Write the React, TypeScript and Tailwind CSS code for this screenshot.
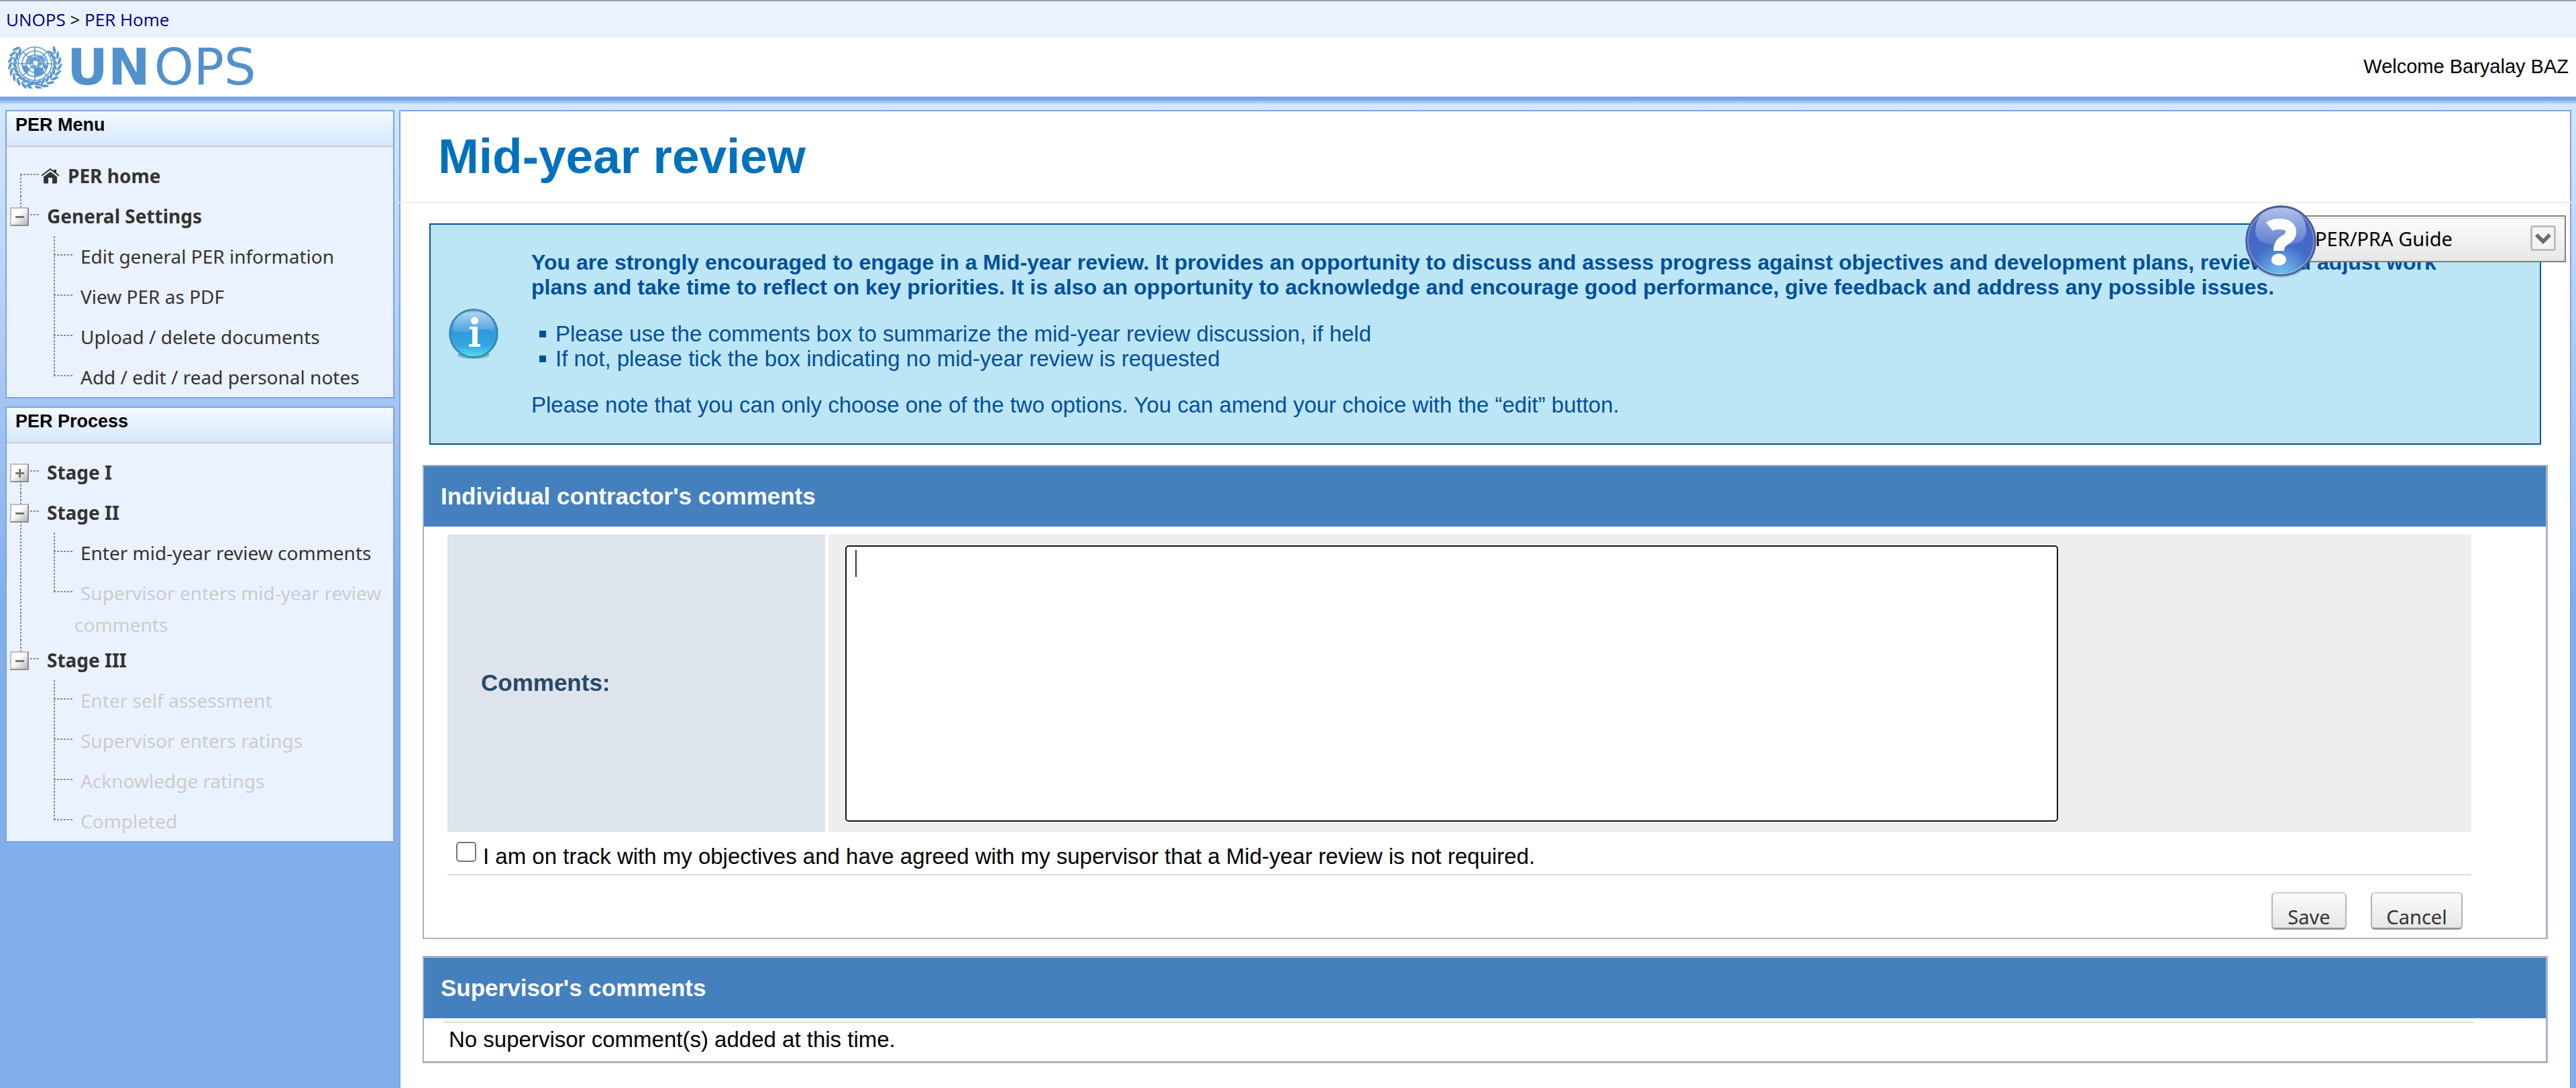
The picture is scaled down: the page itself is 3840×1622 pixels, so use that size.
import React from "react";

type Leaf = { label: string; disabled?: boolean };
type Branch = { label: string; open?: boolean; home?: boolean; items?: Leaf[] };

const menu: Branch[] = [
  { label: "PER home", home: true },
  {
    label: "General Settings",
    open: true,
    items: [
      { label: "Edit general PER information" },
      { label: "View PER as PDF" },
      { label: "Upload / delete documents" },
      { label: "Add / edit / read personal notes" },
    ],
  },
];

const stages: Branch[] = [
  { label: "Stage I", open: false },
  {
    label: "Stage II",
    open: true,
    items: [
      { label: "Enter mid-year review comments" },
      { label: "Supervisor enters mid-year review comments", disabled: true },
    ],
  },
  {
    label: "Stage III",
    open: true,
    items: [
      { label: "Enter self assessment", disabled: true },
      { label: "Supervisor enters ratings", disabled: true },
      { label: "Acknowledge ratings", disabled: true },
      { label: "Completed", disabled: true },
    ],
  },
];

const dotsV =
  "absolute w-[2px] bg-[repeating-linear-gradient(to_bottom,#8a8a8a_0px,#8a8a8a_3px,transparent_3px,transparent_5px)]";
const dotsH =
  "absolute h-[2px] bg-[repeating-linear-gradient(to_right,#8a8a8a_0px,#8a8a8a_3px,transparent_3px,transparent_5px)]";

function Emblem() {
  const leaves = [];
  for (let i = 0; i < 9; i++) {
    const a = ((100 + i * 15) * Math.PI) / 180;
    for (const side of [1, -1]) {
      const x = 41 + side * Math.cos(a) * 33;
      const y = 28 + Math.sin(a) * 31;
      const deg = (side * (a * 180)) / Math.PI;
      leaves.push(
        <g key={`${i}-${side}`} transform={`translate(${x} ${y}) rotate(${side === 1 ? deg : 180 + deg})`}>
          <ellipse cx="4" cy="-1" rx="2" ry="6" transform="rotate(28)" />
          <ellipse cx="-3" cy="-1" rx="2" ry="6" transform="rotate(-28)" />
        </g>
      );
    }
  }
  return (
    <svg viewBox="0 0 82 64" className="h-[64px] w-[82px]" aria-hidden="true">
      <g fill="#5b98cf">{leaves}</g>
      <circle cx="41" cy="27" r="26" fill="#fff" />
      <g fill="none" stroke="#5b98cf" strokeWidth="1.6">
        <circle cx="41" cy="27" r="25" />
        <circle cx="41" cy="27" r="19" />
        <circle cx="41" cy="27" r="13" />
        <circle cx="41" cy="27" r="7" />
        <path d="M41 2V52M16 27H66M23 9L59 45M59 9L23 45" />
        <path d="M24 60Q36 60 44 54M58 60Q46 60 38 54" strokeWidth="2.4" />
      </g>
      <g fill="#5b98cf">
        <path d="M33 15l8 2 8-3 7 4 2 6-5 1-3 6-6-2-2 6-4-3-1-6-5 2-4-4 2-5z" opacity=".8" />
        <path d="M21 29l8 1 4 5-3 7-5-3z" />
        <path d="M40 34l9-2 6 4-4 8-8 2-4-5z" />
        <path d="M52 27l7 2 1 5-5 1z" />
      </g>
      <circle cx="42" cy="26" r="3.5" fill="#fff" />
    </svg>
  );
}

function HomeIcon() {
  return (
    <svg viewBox="0 0 28 24" className="absolute left-[51px] top-[18px] h-[24px] w-[28px]" aria-hidden="true">
      <path d="M1 12L14 2l13 10" fill="none" stroke="#333" strokeWidth="2" />
      <path d="M19 3h4v6l-4-3z" fill="#333" />
      <path d="M4 13.500L14 6l10 7.500V22q0 1.500-1.500 1.500H17V15h-6v8.500H5.500Q4 23.500 4 22z" fill="#333" />
    </svg>
  );
}

function Tree({ nodes }: { nodes: Branch[] }) {
  return (
    <ul className="pt-[13px] font-['Noto_Sans',sans-serif] text-[28px] leading-[47px] text-[#333333]">
      {nodes.map((node, i) => (
        <li key={node.label} className="relative">
          {i > 0 && <span className={`${dotsV} left-[20px] top-0 h-[28px]`} />}
          {i < nodes.length - 1 && <span className={`${dotsV} bottom-0 left-[20px] top-[28px]`} />}
          <div className="relative h-[60px] pl-[60px] pt-[7px]">
            {node.home ? (
              <>
                <span className={`${dotsH} left-[20px] top-[27px] w-[28px]`} />
                <HomeIcon />
                <a href="#home" className="block pl-[31px] font-bold">
                  {node.label}
                </a>
              </>
            ) : (
              <>
                <span className={`${dotsH} left-[35px] top-[27px] w-[13px]`} />
                <button
                  type="button"
                  aria-label={`${node.open ? "Collapse" : "Expand"} ${node.label}`}
                  aria-expanded={!!node.open}
                  className="absolute left-[5px] top-[17px] flex h-[28px] w-[28px] items-center justify-center border-2 border-b-[#8c8c8c] border-l-[#bdbdbd] border-r-[#8c8c8c] border-t-[#bdbdbd] bg-linear-to-br from-white from-40% to-[#b4b4b4]"
                >
                  <span className="absolute h-[3px] w-[13px] bg-[#757575]" />
                  {!node.open && <span className="absolute h-[13px] w-[3px] bg-[#757575]" />}
                </button>
                <a href="#section" className="block font-bold">
                  {node.label}
                </a>
              </>
            )}
          </div>
          {node.items && (
            <ul>
              {node.items.map((item, j) => (
                <li
                  key={item.label}
                  className="relative -mb-px min-h-[61px] pl-[101px] pr-[5px] pt-[7px] indent-[9px]"
                >
                  <span
                    className={
                      j === node.items!.length - 1
                        ? `${dotsV} left-[70px] top-0 h-[29px]`
                        : `${dotsV} bottom-0 left-[70px] top-0`
                    }
                  />
                  <span className={`${dotsH} left-[70px] top-[27px] w-[28px]`} />
                  {item.disabled ? (
                    <span className="block text-[#cccccc]">{item.label}</span>
                  ) : (
                    <a href="#item" className="block">
                      {item.label}
                    </a>
                  )}
                </li>
              ))}
            </ul>
          )}
        </li>
      ))}
    </ul>
  );
}

function Panel({ title, nodes }: { title: string; nodes: Branch[] }) {
  return (
    <nav aria-label={title} className="border-2 border-[#7aa5e6] bg-[#ebf2ff]">
      <h2 className="h-[53px] border-b-2 border-[#c9cbd0] bg-linear-to-b from-[#f4faff] to-[#d5e7ff] pl-[13px] pt-[3px] text-[27px] font-bold leading-[34px] text-black">
        {title}
      </h2>
      <Tree nodes={nodes} />
    </nav>
  );
}

function InfoIcon() {
  return (
    <svg viewBox="0 0 74 76" className="h-[76px] w-[74px]" aria-hidden="true">
      <defs>
        <linearGradient id="infoBody" x1="0" y1="0" x2="0" y2="1">
          <stop offset="0" stopColor="#7dbbe8" />
          <stop offset="0.45" stopColor="#2f98dc" />
          <stop offset="0.75" stopColor="#33a5e4" />
          <stop offset="1" stopColor="#55e0f4" />
        </linearGradient>
        <linearGradient id="infoGloss" x1="0" y1="0" x2="0" y2="1">
          <stop offset="0" stopColor="#c4dcf4" />
          <stop offset="1" stopColor="#4fa5e0" />
        </linearGradient>
      </defs>
      <ellipse cx="37" cy="69" rx="24" ry="6" fill="#4b8ba0" opacity=".6" />
      <circle cx="37" cy="37" r="35.500" fill="url(#infoBody)" stroke="#3a87a5" strokeWidth="2.500" />
      <path d="M6 34Q6 5 37 5t31 29q-15-6-31-1T6 34z" fill="url(#infoGloss)" opacity=".75" />
      <circle cx="38.500" cy="18" r="5.500" fill="#fff" />
      <path d="M31 27h12v26h4v4H30v-4h5V31h-4z" fill="#fff" />
    </svg>
  );
}

function HelpIcon() {
  return (
    <svg viewBox="0 0 108 112" className="h-[112px] w-[108px]" aria-hidden="true">
      <defs>
        <radialGradient id="helpBody" cx="0.5" cy="1" r="0.95">
          <stop offset="0" stopColor="#6fc3ec" />
          <stop offset="0.2" stopColor="#62a5e2" />
          <stop offset="0.48" stopColor="#466bc9" />
          <stop offset="1" stopColor="#4565c4" />
        </radialGradient>
        <linearGradient id="helpGloss" x1="0" y1="0" x2="0" y2="1">
          <stop offset="0" stopColor="#c5d0ec" />
          <stop offset="1" stopColor="#5f7fd2" />
        </linearGradient>
      </defs>
      <circle cx="54" cy="56" r="53" fill="#000" opacity=".15" />
      <circle cx="54" cy="54" r="51.500" fill="url(#helpBody)" stroke="#4d5f96" strokeWidth="2.500" />
      <circle cx="54" cy="54" r="49" fill="none" stroke="#a9b9e4" strokeWidth="1.500" opacity=".6" />
      <path d="M16 40Q17 5 54 5t38 35q-1 21-38 21T16 40z" fill="url(#helpGloss)" opacity=".85" />
      <path
        d="M37 33q5-4 15-4 17 0 17 12 0 7-9 12-9 5-9 16"
        fill="none"
        stroke="#fff"
        strokeWidth="16"
      />
      <ellipse cx="51" cy="82" rx="11" ry="9" fill="#fff" />
    </svg>
  );
}

function SectionTitle({ children }: { children: React.ReactNode }) {
  return <h2 className="bg-[#4480bd] pl-[25px] text-[35px] font-bold leading-[90px] text-white">{children}</h2>;
}

const buttonClass =
  "h-[56px] rounded-[6px] border-2 border-b-[3px] border-b-[#979797] border-l-[#b5b5b5] border-r-[#b5b5b5] border-t-[#cfcfcf] bg-linear-to-b from-[#fbfbfb] to-[#e6e6e6] pt-[19px] text-center font-['Noto_Sans',sans-serif] text-[29px] leading-[32px] text-[#333333]";

export default function App() {
  return (
    <div className="flex min-h-screen flex-col bg-[linear-gradient(to_bottom,#d5e7ff_156px,#82aeea_900px)] font-['Liberation_Sans',Arial,sans-serif] text-black">
      <nav
        aria-label="Breadcrumb"
        className="h-[56px] border-t-2 border-[#9aa1ad] bg-[#ebf2ff] pl-[9px] font-['Open_Sans',sans-serif] text-[26px] leading-[54px]"
      >
        <a href="#unops" className="text-[#000080]">
          UNOPS
        </a>{" "}
        &gt;{" "}
        <a href="#per" className="text-[#000080]">
          PER Home
        </a>
      </nav>

      <header className="flex h-[88px] items-center justify-between bg-white pl-[11px] pr-[11px]">
        <a href="#top" aria-label="UNOPS" className="flex items-center">
          <Emblem />
          <span className="ml-[7px] flex gap-[6px] font-['DejaVu_Sans',sans-serif] text-[75px] leading-[88px] text-[#5291cb]">
            <b>UN</b>
            <span>OPS</span>
          </span>
        </a>
        <p className="text-[29px]">Welcome Baryalay BAZ</p>
      </header>
      <div className="h-[12px] bg-linear-to-b from-[#7aa5e6] from-35% to-[#d5e7ff]" />

      <div className="flex flex-1 gap-[7px] pl-[8px] pr-[7px] pt-[8px]">
        <aside className="flex w-[580px] shrink-0 flex-col gap-[12px]">
          <Panel title="PER Menu" nodes={menu} />
          <Panel title="PER Process" nodes={stages} />
        </aside>

        <main className="relative min-w-0 flex-1 border-2 border-b-0 border-[#7aa5e6] bg-white pb-[36px]">
          <h1 className="pb-[28px] pl-[56px] pt-[27px] text-[73px] font-bold leading-[80px] text-[#0071bc]">
            Mid-year review
          </h1>
          <hr className="-mx-[2px] border-t-2 border-[#eeeeee]" />

          <div className="absolute right-[6px] top-[139px] flex items-start">
            <span className="relative z-10 -mr-[53px]">
              <HelpIcon />
            </span>
            <div className="relative mt-[16px]">
              <select
                aria-label="Guide"
                className="block h-[70px] w-[424px] appearance-none border-2 border-[#808080] bg-linear-to-b from-[#fdfdfd] to-[#e7e7e7] pl-[48px] font-['Noto_Sans',sans-serif] text-[29px] text-black shadow-[inset_0_2px_0_#ffffff,inset_0_3px_0_#cccccc]"
              >
                <option>PER/PRA Guide</option>
              </select>
              <svg
                viewBox="0 0 38 38"
                className="pointer-events-none absolute right-[15px] top-[15px] h-[38px] w-[38px]"
                aria-hidden="true"
              >
                <rect x="1.500" y="1.500" width="35" height="35" rx="2" fill="#f4f4f4" stroke="#b3b3b3" strokeWidth="2.500" />
                <path d="M9 14l10 10 10-10" fill="none" stroke="#6b6b6b" strokeWidth="5.500" />
              </svg>
            </div>
          </div>

          <section className="mx-[43px] mt-[30px] flex items-center border-2 border-[#00559f] bg-[#bce5f6] pb-[39px] pl-[27px] pr-[80px] pt-[38px] text-[33px] leading-[37px] text-[#00509a]">
            <div className="w-[123px] shrink-0">
              <InfoIcon />
            </div>
            <div className="flex flex-col gap-[32px]">
              <p className="text-[32px] font-bold leading-[37px]">
                You are strongly encouraged to engage in a Mid-year review. It provides an opportunity to discuss and
                assess progress against objectives and development plans, review and adjust work plans and take time to
                reflect on key priorities. It is also an opportunity to acknowledge and encourage good performance, give
                feedback and address any possible issues.
              </p>
              <ul>
                {[
                  "Please use the comments box to summarize the mid-year review discussion, if held",
                  "If not, please tick the box indicating no mid-year review is requested",
                ].map((t) => (
                  <li key={t} className="flex items-center gap-[14px] pl-[12px]">
                    <span className="h-[10px] w-[10px] bg-[#00509a]" />
                    {t}
                  </li>
                ))}
              </ul>
              <p>
                Please note that you can only choose one of the two options. You can amend your choice with the “edit”
                button.
              </p>
            </div>
          </section>

          <section className="mx-[33px] mt-[30px] border-2 border-r-[3px] border-[#a6b2c6]">
            <SectionTitle>Individual contractor's comments</SectionTitle>
            <form className="pb-[12px] pl-[35px] pr-[111px] pt-[12px]" onSubmit={(e) => e.preventDefault()}>
              <div className="flex gap-[5px]">
                <label
                  htmlFor="comments"
                  className="flex w-[563px] shrink-0 items-center bg-[#dde4eb] pl-[50px] text-[35px] font-bold text-[#264969]"
                >
                  Comments:
                </label>
                <div className="flex-1 bg-[#eeeeee] pb-[15px] pl-[25px] pt-[16px]">
                  <div className="relative w-[1808px] max-w-full">
                    <textarea
                      id="comments"
                      className="block h-[412px] w-full resize-none rounded-[5px] border-2 border-[#101010] bg-white p-[12px] text-[33px] shadow-[0_0_0_1px_#ffffff] outline-none"
                    />
                    <span className="pointer-events-none absolute left-[15px] top-[7px] h-[40px] w-[2px] bg-[#333333]" />
                  </div>
                </div>
              </div>
              <div className="flex h-[65px] items-start gap-[10px] border-b-2 border-[#dddddd] pl-[13px] pt-[15px]">
                <input
                  id="on-track"
                  type="checkbox"
                  className="h-[30px] w-[30px] appearance-none rounded-[5px] border-2 border-[#767676] bg-white checked:bg-[#4480bd]"
                />
                <label htmlFor="on-track" className="pt-[3px] text-[33px] leading-[37px]">
                  I am on track with my objectives and have agreed with my supervisor that a Mid-year review is not
                  required.
                </label>
              </div>
              <div className="flex justify-end gap-[36px] pr-[13px] pt-[25px]">
                <button type="submit" className={`${buttonClass} w-[112px]`}>
                  Save
                </button>
                <button type="button" className={`${buttonClass} w-[137px]`}>
                  Cancel
                </button>
              </div>
            </form>
          </section>

          <section className="mx-[33px] mt-[25px] border-x-2 border-y-[3px] border-r-[3px] border-[#a6b2c6]">
            <SectionTitle>Supervisor's comments</SectionTitle>
            <div className="pb-[14px] pl-[30px] pr-[106px] pt-[5px]">
              <p className="border-t-2 border-[#dddddd] pl-[7px] pt-[6px] text-[33px] leading-[37px]">
                No supervisor comment(s) added at this time.
              </p>
            </div>
          </section>
        </main>
      </div>
    </div>
  );
}
